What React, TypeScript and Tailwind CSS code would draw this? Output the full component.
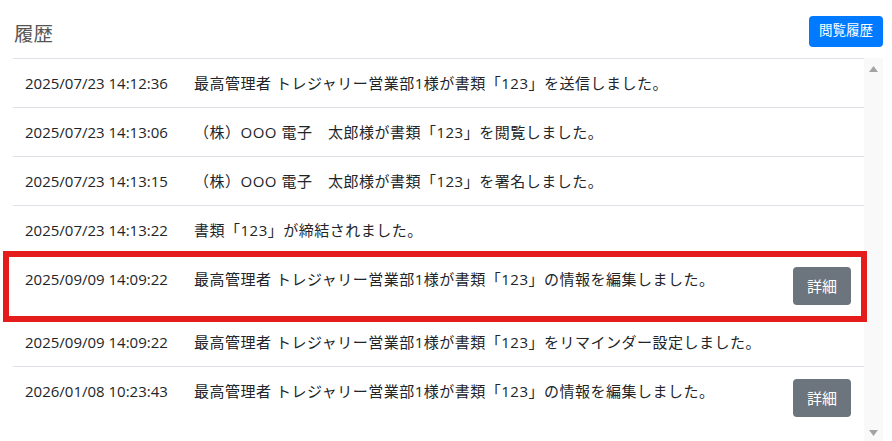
import React from "react";

type Entry = { at: string; text: string; detail?: boolean };

const entries: Entry[] = [
  { at: "2025/07/23 14:12:36", text: "最高管理者 トレジャリー営業部1様が書類「123」を送信しました。" },
  { at: "2025/07/23 14:13:06", text: "（株）OOO 電子　太郎様が書類「123」を閲覧しました。" },
  { at: "2025/07/23 14:13:15", text: "（株）OOO 電子　太郎様が書類「123」を署名しました。" },
  { at: "2025/07/23 14:13:22", text: "書類「123」が締結されました。" },
  { at: "2025/09/09 14:09:22", text: "最高管理者 トレジャリー営業部1様が書類「123」の情報を編集しました。", detail: true },
  { at: "2025/09/09 14:09:22", text: "最高管理者 トレジャリー営業部1様が書類「123」をリマインダー設定しました。" },
  { at: "2026/01/08 10:23:43", text: "最高管理者 トレジャリー営業部1様が書類「123」の情報を編集しました。", detail: true },
];

const font = { fontFamily: '"Open Sans", "Noto Sans CJK JP", sans-serif' };

export default function App() {
  return (
    <div
      className="relative w-[892px] h-[441px] overflow-hidden bg-white text-[#212529]"
      style={font}
    >
      <div className="flex items-center justify-between h-[58px] pt-[6px] pl-[14px] pr-[9px]">
        <h2 className="mt-[4px] text-[19.5px] leading-none text-[#555]">履歴</h2>
        <button className="h-[31px] px-[10px] -mt-[2px] rounded-[4px] bg-[#007bff] text-white text-[13.5px] leading-none">
          閲覧履歴
        </button>
      </div>

      <div className="flex pl-[13px] pr-[9px] h-[383px]">
        <ul className="flex-1 border-t border-[#dee2e6]">
          {entries.map((e, i) => (
            <li
              key={i}
              className="flex items-start border-b last:border-b-0 border-[#dee2e6] py-3 pl-3 pr-[13px] text-[15px] leading-6"
            >
              <span className="w-[169px] shrink-0">{e.at}</span>
              <span className="flex-1 tracking-[0.5px]">{e.text}</span>
              {e.detail && (
                <button className="h-[38px] w-[58px] rounded-[4px] bg-[#6c757d] text-white text-[15px] leading-none">
                  詳細
                </button>
              )}
            </li>
          ))}
        </ul>
        <div className="w-[19px] bg-[#f9f9f9] flex flex-col items-center justify-between pt-[8px] pb-[5px]">
          <svg width="9" height="6" viewBox="0 0 9 6">
            <path d="M0 6 L4.5 0 L9 6 Z" fill="#a3a3a3" />
          </svg>
          <svg width="9" height="6" viewBox="0 0 9 6">
            <path d="M0 0 L4.5 6 L9 0 Z" fill="#a3a3a3" />
          </svg>
        </div>
      </div>

      <div className="absolute left-[3px] top-[251px] w-[864px] h-[71px] border-[6px] border-[#e41c1c] pointer-events-none" />
    </div>
  );
}
